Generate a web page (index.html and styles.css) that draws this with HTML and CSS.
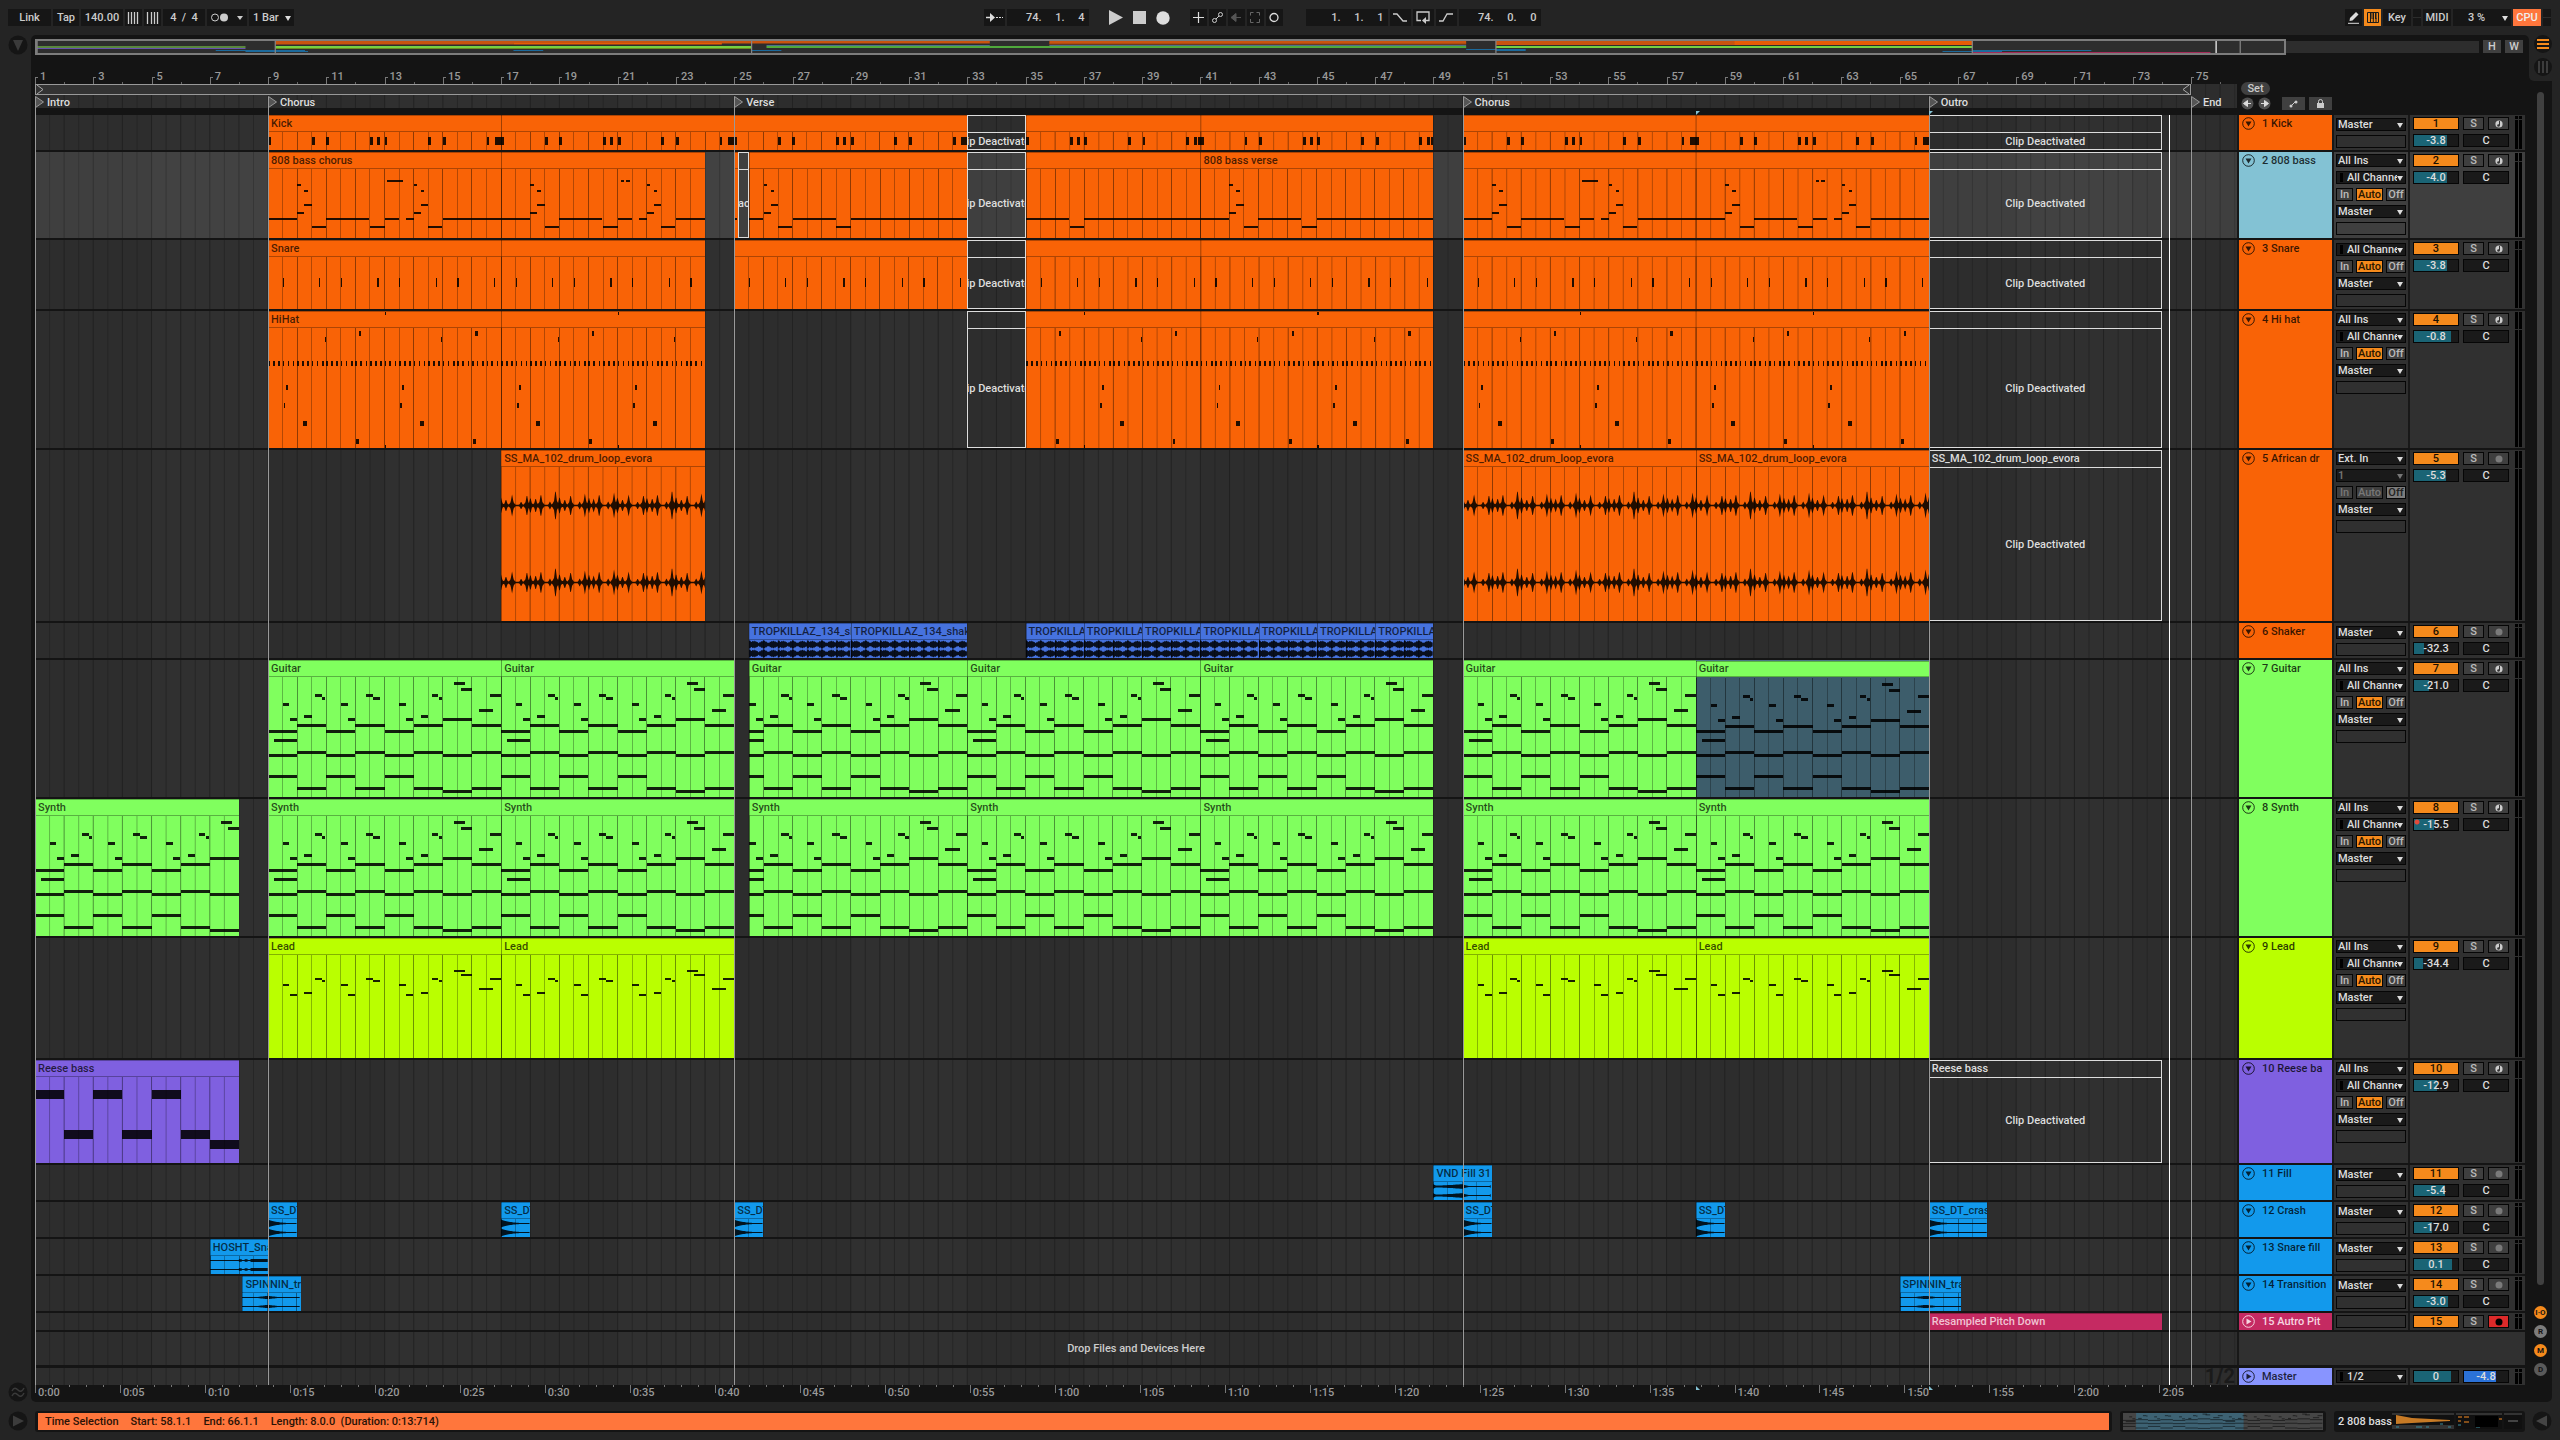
FILE: index.html
```html
<!DOCTYPE html>
<html lang="en">
<head>
    <meta charset="UTF-8">
    <meta name="viewport" content="width=device-width, initial-scale=1.0">
    <title>Arrangement</title>
    <link rel="stylesheet" href="styles.css">
</head>
<body>
    <header class="topbar">
        <div class="group">
            <button class="ctl w-link">Link</button>
            <button class="ctl w-tap">Tap</button>
            <input class="ctl w-field" value="140.00" aria-label="Tempo">
            <button class="ctl w-icon" aria-label="Nudge down"><svg width="13" height="12"><path d="M1.5 0v12M4.5 0v12M7.5 0v12M10.5 0v12" stroke="#ccc" stroke-width="1.3"/></svg></button>
            <button class="ctl w-icon" aria-label="Nudge up"><svg width="13" height="12"><path d="M1.5 0v12M5.5 0v12M8.5 0v12M11.5 0v12" stroke="#ccc" stroke-width="1.3"/></svg></button>
            <input class="ctl w-field" value="4  /  4" aria-label="Time signature">
            <button class="ctl w-metro" aria-label="Metronome"><svg width="34" height="11"><circle cx="5" cy="5.500" r="3.500" fill="none" stroke="#ccc"/><circle cx="14" cy="5.500" r="4" fill="#ccc"/><path d="M27 4h6l-3 4z" fill="#ccc"/></svg></button>
            <span class="picker w-quant"><select class="ctl" aria-label="Quantization"><option>1 Bar</option></select></span>
        </div>
        <div class="spacer-left"></div>
        <div class="group">
            <button class="ctl w-wide" aria-label="Follow"><svg width="17" height="11"><path d="M0 5.500h5" stroke="#ddd" stroke-width="1.5"/><path d="M4 1l5 4.500-5 4.500z" fill="#ddd"/><path d="M10 5.500h2M13 5.500h2M16 5.500h1" stroke="#ddd"/></svg></button>
            <input class="ctl w-pos" value="74.     1.     4" aria-label="Arrangement position">
            <div class="transport">
                <button class="bare" aria-label="Play"><svg width="14" height="15"><path d="M0 0l14 7.500-14 7.500z" fill="#ccc"/></svg></button>
                <button class="bare" aria-label="Stop"><svg width="13" height="13"><path d="M0 0h13v13H0z" fill="#ccc"/></svg></button>
                <button class="bare" aria-label="Record"><svg width="14" height="14"><circle cx="7" cy="7" r="6.700" fill="#ddd"/></svg></button>
            </div>
            <button class="ctl w-icon" aria-label="Overdub"><svg width="11" height="11"><path d="M5.500 0v11M0 5.500h11" stroke="#ddd" stroke-width="1.200"/></svg></button>
            <button class="ctl w-icon" aria-label="Automation arm"><svg width="11" height="11"><circle cx="2.500" cy="8.500" r="2" fill="none" stroke="#ccc"/><circle cx="8.500" cy="2.500" r="2" fill="none" stroke="#ccc"/><path d="M4 7l3-3" stroke="#ccc"/></svg></button>
            <button class="ctl w-icon" aria-label="Re-enable automation"><svg width="10" height="11"><path d="M0 5.500l5-4v8zM4 5.500h6" fill="#555" stroke="#555"/></svg></button>
            <button class="ctl w-icon" aria-label="Capture"><svg width="10" height="11"><path d="M.5 3.500v-3h3M6.500.5h3v3M9.500 7v3.500h-3M3.500 10.500h-3V7" fill="none" stroke="#666"/></svg></button>
            <button class="ctl w-icon" aria-label="Session record"><svg width="10" height="11"><circle cx="5" cy="5.500" r="4" fill="none" stroke="#ddd" stroke-width="1.300"/></svg></button>
            <div class="gap-wide"></div>
            <input class="ctl w-pos" value="1.     1.     1" aria-label="Loop start">
            <button class="ctl w-wide" aria-label="Punch in"><svg width="14" height="9"><path d="M0 1h4l6 7h4" fill="none" stroke="#ccc" stroke-width="1.300"/></svg></button>
            <button class="ctl w-wide" aria-label="Loop"><svg width="14" height="13"><path d="M5 9.500H1V1h12v8.500H9" fill="none" stroke="#ccc" stroke-width="1.300"/><path d="M10 6v7L6 9.500z" fill="#ccc"/></svg></button>
            <button class="ctl w-wide" aria-label="Punch out"><svg width="14" height="9"><path d="M0 8h4l4-7h6" fill="none" stroke="#ccc" stroke-width="1.300"/></svg></button>
            <input class="ctl w-pos" value="74.     0.     0" aria-label="Loop length">
        </div>
        <div class="spacer-right"></div>
        <div class="group">
            <button class="ctl w-icon" aria-label="Draw mode"><svg width="11" height="12"><path d="M1.500 9l.5-3 6-6 2.500 2.500-6 6z" fill="#ddd"/><path d="M0 11.300h11" stroke="#ddd"/></svg></button>
            <button class="ctl w-icon on" aria-label="Computer keyboard"><svg width="12" height="11"><path d="M.5.5h11v10H.5zM3.500 6v4M6.300 6v4M9 6v4" fill="none" stroke="#1a1a1a"/><path d="M3 1h1.500v6H3zM5.500 1H7v6H5.500zM8 1h1.500v6H8z" fill="#1a1a1a"/></svg></button>
            <button class="ctl w-key">Key</button>
            <span class="ctl w-led"><i></i></span>
            <button class="ctl w-midi">MIDI</button>
            <span class="picker w-cpu"><select class="ctl" aria-label="CPU load"><option>3 %</option></select></span>
            <button class="ctl w-key cpu">CPU</button>
            <span class="ctl w-led"><i></i></span>
        </div>
    </header>

    <main class="workspace">
        <div class="gutter">
            <button class="round" aria-label="Show browser"><svg width="20" height="20"><circle cx="10" cy="10" r="9.500" fill="#151515"/><path d="M5 5h10l-5 11z" fill="#3a3a3a"/></svg></button>
            <button class="round" aria-label="Groove pool"><svg width="20" height="20"><circle cx="10" cy="10" r="9.500" fill="#151515"/><path d="M4 9c2-4 4-3 6-1s4 2 6-2M4 14c2-4 4-3 6-1s4 2 6-2" fill="none" stroke="#3a3a3a" stroke-width="1.500"/></svg></button>
        </div>
        <section class="arranger">
            <div class="overview-row">
                <div class="overview"><svg id="overview" viewBox="0 0 8209 12" preserveAspectRatio="none"></svg><div class="overview-frame"></div></div>
                <button class="hw">H</button>
                <button class="hw">W</button>
            </div>
            <div class="heads">
                <div class="rulers">
                    <div class="bar-ruler" id="barRuler"></div>
                    <div class="loop-row" id="loopRow"><div class="loop" id="loop"><svg width="9" height="9"><path d="M1 0l6 4.500L1 9" fill="none" stroke="#aaa"/></svg><svg width="9" height="9"><path d="M8 0L2 4.500 8 9" fill="none" stroke="#aaa"/></svg></div></div>
                    <div class="locator-row" id="locatorRow"></div>
                </div>
                <div class="locator-tools">
                    <button class="set">Set</button>
                    <div class="tool-line">
                        <button class="nav" aria-label="Previous locator"><svg width="13" height="13"><circle cx="6.500" cy="6.500" r="6" fill="#505050"/><path d="M2.500 6.500l4-3v6zM6 6.500h4" fill="#ddd" stroke="#ddd"/></svg></button>
                        <button class="nav" aria-label="Next locator"><svg width="13" height="13"><circle cx="6.500" cy="6.500" r="6" fill="#505050"/><path d="M10.500 6.500l-4-3v6zM7 6.500H3" fill="#ddd" stroke="#ddd"/></svg></button>
                        <button class="tool first" aria-label="Automation mode"><svg width="9" height="8"><path d="M1.500 6.500l5-5" stroke="#ccc"/><circle cx="2" cy="6" r="1.500" fill="#ccc"/><circle cx="7" cy="2" r="1.500" fill="#ccc"/></svg></button>
                        <button class="tool" aria-label="Lock envelopes"><svg width="9" height="9"><path d="M1 4h7v5H1z" fill="#ccc"/><path d="M2.500 4V2.500a2 2 0 0 1 4 0V4" fill="none" stroke="#ccc"/></svg></button>
                    </div>
                </div>
            </div>
            <div class="tracks" id="tracks"></div>
            <div class="time-ruler"><div class="time-scale" id="timeScale"></div></div>
            <div class="overlay" id="overlay"></div>
        </section>
        <aside class="side">
            <div class="notch">
                <button class="round" aria-label="Arrangement view"><svg width="18" height="18"><circle cx="9" cy="9" r="9" fill="#151515"/><path d="M3 5h12M3 9h12M3 13h12" stroke="#f58a1c" stroke-width="2"/></svg></button>
                <button class="round" aria-label="Session view"><svg width="18" height="18"><circle cx="9" cy="9" r="9" fill="#151515"/><path d="M5 3v12M9 3v12M13 3v12" stroke="#3c3c3c" stroke-width="2"/></svg></button>
            </div>
            <div class="scroll"></div>
            <div class="toggles">
                <button class="dot lit">I·O</button>
                <button class="dot">R</button>
                <button class="dot lit">M</button>
                <button class="dot dim">D</button>
            </div>
        </aside>
    </main>

    <footer class="statusbar">
        <button class="round" aria-label="Info view"><svg width="20" height="20"><circle cx="10" cy="10" r="9.500" fill="#151515"/><path d="M5 4.500l11 5.500-11 5.500z" fill="#3c3c3c"/></svg></button>
        <div class="message"><p><span>Time Selection</span><span>Start: 58.1.1</span><span>End: 66.1.1</span><span>Length: 8.0.0&nbsp; (Duration: 0:13:714)</span></p></div>
        <div class="thumb"><svg id="clipThumb" viewBox="0 0 199 16" preserveAspectRatio="none"></svg></div>
        <div class="device"><span>2 808 bass</span>
            <svg viewBox="0 0 130 16" width="130" height="16">
                <path d="M0 0h62v16H0zM64 0h46v16H64zM112 0h18v16h-18z" fill="#101010"/>
                <path d="M0 0h62v2H0zM0 12h62v4H0zM64 0h46v2H64zM112 0h18v2h-18z" fill="#333"/>
                <path d="M4 2l16 3 38 2v1l-38 2-16 1z" fill="#c77a25"/>
                <path d="M4 14h3M24 14h6M34 14h3M48 11h3M56 14h3M66 12h3M84 14h4" stroke="#3a8ea0"/>
                <path d="M66 4h4M72 4h5M66 8h3M72 9h5M107 6h3" stroke="#a8621d" stroke-width="1.500"/>
                <path d="M83 3h23v11H83z" fill="#000"/><path d="M116 8h10" stroke="#777"/>
            </svg>
        </div>
        <button class="round" aria-label="Show clip view"><svg width="20" height="20"><circle cx="10" cy="10" r="9.500" fill="#151515"/><path d="M15 4.500L4 10l11 5.500z" fill="#444"/></svg></button>
    </footer>
    <script src="script.js"></script>
</body>
</html>
```
FILE: styles.css
```css
* {
    box-sizing: border-box;
    margin: 0;
    padding: 0;
}

body {
    min-height: 100vh;
    display: flex;
    flex-direction: column;
    background: #242424;
    color: #ccc;
    font-family: Roboto, "Liberation Sans", sans-serif;
    font-size: 11px;
    font-weight: 500;
    overflow-x: hidden;
}

button, input, select {
    font: inherit;
    color: inherit;
    border: none;
    outline: none;
    background: none;
    border-radius: 0;
}

svg {
    display: block;
}

/* top bar */
.topbar {
    height: 35px;
    padding: 0 9px 0 8px;
    display: flex;
    align-items: center;
}

.group {
    display: flex;
    align-items: center;
    gap: 2px;
}

.spacer-left { flex: 6; }
.spacer-right { flex: 7; }
.gap-wide { width: 19px; }

.ctl {
    height: 17px;
    background: #161616;
    display: flex;
    align-items: center;
    justify-content: center;
    text-align: center;
    white-space: nowrap;
}

.w-link { width: 43px; }
.w-tap { width: 26px; }
.w-field { width: 42px; }
.w-icon { width: 17px; }
.w-metro { width: 40px; }
.w-quant { width: 45px; }
.w-wide { width: 21px; }
.w-pos { width: 82px; text-align: right; padding-right: 4px; white-space: pre; }
.w-key { width: 28px; }
.w-led { width: 8px; }
.w-midi { width: 28px; }
.w-cpu { width: 58px; }
.w-led i { width: 8px; height: 1px; background: #2c2c2c; }

.ctl.on { background: #f58a1c; }
.ctl.cpu { background: #ff763c; color: #eee; }

.transport {
    display: flex;
    align-items: center;
    gap: 10px;
    margin: 0 18px;
}

/* drop-down with a small triangle */
.picker {
    position: relative;
    display: block;
}

.picker select {
    appearance: none;
    width: 100%;
    padding: 0 12px 0 4px;
    text-align: left;
}

.picker::after {
    content: "";
    position: absolute;
    right: 3px;
    top: 50%;
    margin-top: -2px;
    border: 3px solid transparent;
    border-top: 5px solid #ddd;
    border-bottom: none;
    pointer-events: none;
}

.w-cpu select { padding-left: 15px; }

/* workspace */
.workspace {
    display: flex;
    padding-right: 8px;
}

.gutter {
    width: 31px;
    display: flex;
    flex-direction: column;
    justify-content: space-between;
    align-items: center;
    padding-left: 4px;
}

.round {
    display: flex;
}

.arranger {
    position: relative;
    flex: 1;
    min-width: 0;
    padding: 4px 4px 0 4px;
    background: #141414;
    border-radius: 5px 5px 0 5px;
}

.overview-row {
    display: flex;
    gap: 4px;
    height: 18px;
    padding-right: 2px;
}

.overview {
    flex: 1;
    position: relative;
    height: 12px;
    margin-top: 2px;
    background: #2d2d2d;
}

.overview svg {
    width: 100%;
    height: 12px;
}

.overview-frame {
    position: absolute;
    left: 0;
    top: -2px;
    width: 92.1%;
    height: 16px;
    border: 2px solid #7c7c7c;
}

.hw {
    width: 18px;
    height: 13px;
    margin-top: 1px;
    background: #404040;
    line-height: 13px;
}

.heads {
    display: flex;
    gap: 2px;
}

.rulers {
    flex: 1;
    min-width: 0;
    padding-bottom: 7px;
}

.bar-ruler {
    position: relative;
    height: 27px;
    overflow: hidden;
    color: #999;
}

.bar-ruler span {
    position: absolute;
    bottom: 0;
    height: 7px;
    border-left: 1px solid #777;
    padding-left: 4px;
}

.bar-ruler span::before {
    content: "";
    position: absolute;
    left: 0;
    top: 0;
    width: 2px;
    height: 1px;
    background: #777;
}

.bar-ruler b {
    display: block;
    font-weight: 500;
    line-height: 12px;
    margin-top: -6px;
}

.bar-ruler i {
    position: absolute;
    bottom: 0;
    width: 1px;
    height: 2px;
    background: #666;
}

.loop-row, .locator-row {
    position: relative;
    background: #2d2d2d;
}

.loop-row { height: 11px; }
.locator-row { height: 13px; }

.loop {
    position: relative;
    display: flex;
    justify-content: space-between;
    height: 11px;
    background: #333;
    border: 1px solid #999;
}

.locator-row span {
    position: absolute;
    top: 1px;
    display: flex;
    gap: 2px;
    line-height: 13px;
    color: #ddd;
}

.locator-tools {
    width: 286px;
    padding: 25px 2px 0 2px;
}

.set {
    display: block;
    width: 29px;
    height: 13px;
    line-height: 13px;
    border-radius: 7px;
    background: #404040;
}

.tool-line {
    display: flex;
    align-items: center;
    gap: 4px;
    margin-top: 2px;
}

.tool {
    width: 23px;
    height: 13px;
    background: #404040;
    display: flex;
    align-items: center;
    justify-content: center;
}

.tool.first { margin-left: 7px; }

/* tracks */
.track {
    display: flex;
    gap: 2px;
    margin-bottom: 2px;
    background: #181818;
}

.track.spare { margin-bottom: 3px; }
.track.master { margin-bottom: 0; }

.lane {
    position: relative;
    flex: 1;
    min-width: 0;
    overflow: hidden;
    background: #2d2d2d;
}

.grid {
    position: absolute;
    left: 0;
    top: 0;
    width: 100%;
    height: 100%;
}

.grid .beat { stroke: #222; }
.grid .half { stroke: #262626; }
.grid .shade { fill: #fff; fill-opacity: .015; }

.selected .lane, .selected .io, .selected .mix { background: #3f3f3f; }
.selected .grid .beat { stroke: #323232; }
.selected .grid .half { stroke: #363636; }

.track-head {
    width: 93px;
    display: flex;
    gap: 7px;
    padding: 2px 0 0 3px;
    line-height: 13px;
    color: rgba(0, 0, 0, .78);
    white-space: nowrap;
    overflow: hidden;
}

.track-head button { height: 13px; }

.io {
    width: 74px;
    padding: 2px;
    background: #303030;
    display: flex;
    flex-direction: column;
    gap: 4px;
}

.io.low { padding-top: 3px; }

.io .picker select {
    display: block;
    height: 13px;
    line-height: 13px;
    padding: 0 9px 0 2px;
    background: #1a1a1a;
    outline: 1px solid #060606;
    outline-offset: -1px;
    color: #ddd;
}

.io .picker.midi select { padding-left: 11px; }
.io .picker.midi::before {
    content: "";
    position: absolute;
    left: 4px;
    top: 2px;
    width: 3px;
    height: 9px;
    background: #000;
}

.io .picker.off select { color: #777; }
.io .picker.off::after { border-top-color: #777; }

.monitor {
    display: flex;
    gap: 3px;
}

.monitor button, .mix button {
    height: 13px;
    line-height: 11px;
    background: #3f3f3f;
    border: 1px solid #060606;
    color: #bbb;
    overflow: hidden;
    display: flex;
    align-items: center;
    justify-content: center;
}

.monitor button:nth-child(1) { width: 17px; }
.monitor button:nth-child(2) { width: 27px; }
.monitor button:nth-child(3) { width: 20px; }
.monitor .lit { background: #f58a1c; color: #2a1700; }
.monitor.off button { color: #777; }
.monitor.off .lit { background: #7c7c7c; color: #222; }

.slot {
    height: 13px;
    border: 1px solid #060606;
}

.mix {
    width: 115px;
    padding: 2px 3px 1px;
    background: #303030;
    display: flex;
    justify-content: space-between;
}

.strip {
    width: 96px;
    display: flex;
    flex-wrap: wrap;
    align-content: flex-start;
    gap: 4px;
}

.mix .strip .active { width: 46px; background: #f58a1c; color: #1c1000; }
.mix .solo, .mix .arm { width: 21px; }
.mix .arm.red { background: #dc2a2a; }

.value {
    width: 46px;
    height: 13px;
    border: 1px solid #060606;
    text-align: center;
    color: #ddd;
    background: linear-gradient(to right, #1a6475 var(--level, 0%), #1a1a1a var(--level, 0%));
}

.value.cue { background: linear-gradient(to right, #2b72d8 var(--level), #1a1a1a var(--level)); }

.strip .automated {
    background-image: radial-gradient(circle at 3px 3px, #e04a3a 2px, transparent 3px), linear-gradient(to right, #1a6475 var(--level), #1a1a1a var(--level));
}

.meter {
    position: relative;
    width: 7px;
    margin-top: -1px;
    border-left: 3px solid #000;
    border-right: 3px solid #000;
}

.meter::after {
    content: "";
    position: absolute;
    left: -3px;
    right: -3px;
    top: 3px;
    height: 1px;
    background: #303030;
}

.tall .meter::after { top: 17px; }

.tall.short-meter .meter::after { top: 8px; }

.drop {
    position: absolute;
    left: 0;
    right: 0;
    top: 0;
    line-height: 33px;
    text-align: center;
}

.fill {
    width: 286px;
    background: #303030;
}

.out-label {
    position: absolute;
    right: 2px;
    top: -2px;
    font-size: 20px;
    line-height: 20px;
    font-weight: 700;
    color: #1a1a1a;
}

/* clips */
.clip {
    position: absolute;
    top: 0;
    bottom: 0;
    overflow: hidden;
}

.clip svg {
    position: absolute;
    left: 0;
    top: 0;
    width: 100%;
    height: 100%;
}

.clip h3 {
    position: relative;
    height: 17px;
    padding-left: 3px;
    border-top: 1px solid rgba(0, 0, 0, .3);
    border-bottom: 1px solid rgba(0, 0, 0, .3);
    font-size: 11px;
    font-weight: 500;
    line-height: 15px;
    color: rgba(0, 0, 0, .72);
    white-space: nowrap;
    overflow: hidden;
}

.clip .beat { stroke: rgba(0, 0, 0, .42); }
.clip .half { stroke: rgba(0, 0, 0, .28); }
.clip .edge { stroke: rgba(0, 0, 0, .36); }
.clip .note { fill: #000; fill-opacity: .87; }

.orange { background: #f96306; }
.green { background: #80ff5e; }
.lime { background: #baff00; }
.purple { background: #7f60e0; }
.blue { background: #1299ec; }
.royal { background: #4672de; }
.sky { background: #83c2d4; }
.pink { background: #c52a62; }
.peri { background: #8894ff; }

.pink.clip h3 { color: #f0c4d4; border-bottom: none; }
.pink.track-head { color: #f6d5e0; }

.clip.picked { background: #3d5d6b; border-top: 1px solid #4c7484; }
.clip.picked h3 { background: #80ff5e; height: 16px; line-height: 14px; }

.clip.dead { border: 1px solid #ddd; }
.clip.dead h3 {
    color: #ddd;
    border-top: none;
    border-bottom: 1px solid #ddd;
    padding-left: 2px;
}

.clip.dead p {
    height: calc(100% - 17px);
    display: flex;
    align-items: center;
    justify-content: center;
    white-space: nowrap;
    color: #ddd;
}

/* time ruler and full height markers */
.time-ruler {
    height: 17px;
    padding-right: 288px;
}

.time-scale {
    position: relative;
    height: 17px;
    overflow: hidden;
    color: #999;
}

.time-scale span {
    position: absolute;
    top: 0;
    height: 8px;
    line-height: 15px;
    padding-left: 2px;
    border-left: 1px solid #777;
}

.time-scale i {
    position: absolute;
    top: 0;
    width: 1px;
    height: 2px;
    background: #777;
}

.overlay {
    position: absolute;
    left: 4px;
    right: 292px;
    top: 62px;
    bottom: 17px;
    pointer-events: none;
}

.overlay i {
    position: absolute;
    top: 0;
    bottom: 0;
    width: 1px;
    background: #999;
}

.overlay .playhead { top: 18px; background: #fff; }

.overlay svg {
    position: absolute;
}

.overlay .mark-top { top: 14px; }
.overlay .mark-bottom { bottom: -5px; }

/* right side */
.side {
    width: 23px;
    background: #141414;
    display: flex;
    flex-direction: column;
    align-items: center;
    border-radius: 0 0 5px 0;
}

.notch {
    width: 23px;
    height: 46px;
    background: #242424;
    border-radius: 0 0 0 5px;
    display: flex;
    flex-direction: column;
    align-items: center;
    gap: 5px;
    padding-left: 4px;
}

.scroll {
    flex: 1;
    width: 7px;
    margin-top: 11px;
    border-radius: 4px;
    background: #404040;
}

.toggles {
    display: flex;
    flex-direction: column;
    gap: 6px;
    padding: 21px 0 26px;
}

.dot {
    width: 13px;
    height: 13px;
    border-radius: 7px;
    background: #7c7c7c;
    color: #141414;
    font-size: 8px;
    font-weight: 700;
    line-height: 13px;
    text-align: center;
}

.dot.lit { background: #f58a1c; }
.dot.dim { background: #5a5a5a; }

/* status bar */
.statusbar {
    display: flex;
    align-items: center;
    height: 38px;
    padding: 0 8px;
}

.message {
    flex: 1;
    margin: 0 8px 0 7px;
    padding: 2px 3px;
    background: #141414;
    border-radius: 3px;
}

.message p {
    height: 17px;
    line-height: 17px;
    padding-left: 7px;
    background: #ff763c;
    color: #2a1206;
    display: flex;
    gap: 12px;
}

.thumb {
    width: 206px;
    padding: 2px 3px;
    margin-right: 8px;
    background: #141414;
    border-radius: 3px;
}

.thumb svg {
    width: 100%;
    height: 17px;
    background: #464646;
}

.device {
    width: 191px;
    height: 21px;
    padding: 0 3px 0 4px;
    margin-right: 7px;
    display: flex;
    align-items: center;
    justify-content: space-between;
    background: #141414;
    border-radius: 3px;
    color: #ddd;
    white-space: nowrap;
}
```
FILE: script.js
```js
const BARS = 75.58;
const SEC = 140 / 240;

const pos = (bar) => (bar - 1) / BARS * 100 + '%';
const byId = (id) => document.getElementById(id);

// note: [top, height, start, end], times in bars
const kick = { period: 8, notes: [0, 1.5, 2, 3.5, 3.75, 4, 5.5, 6, 7.5, 7.78, 7.9].map(t => [22, 8, t, t + 0.1]) };

const bassHit = (t) => [[32, 2, t, t + .12], [60, 2, t, t + .24], [38, 2, t + .24, t + .36], [52, 2, t + .24, t + .5], [74, 2, t + .5, t + .98]];
const bass = {
    period: 16, notes: [
        [66, 2, 0, .98], ...bassHit(1), [66, 2, 2, 3.48], [74, 2, 3.5, 4], [66, 2, 4, 4.5], [28, 2, 4.1, 4.62], [66, 2, 4.73, 5], ...bassHit(5), [66, 2, 6, 8.98],
        ...bassHit(9), [66, 2, 10, 11.48], [74, 2, 11.5, 12], [66, 2, 12, 12.5], [28, 2, 12.1, 12.23], [28, 2, 12.3, 12.42], [66, 2, 12.73, 13], ...bassHit(13), [66, 2, 14, 16]
    ]
};
const bassVerse = { period: 8, notes: [[66, 2, 0, .98], ...bassHit(1), [66, 2, 2, 3.48], [74, 2, 3.5, 4], [66, 2, 4, 8]] };
const snare = { period: 4, notes: [.5, 1.75, 2.5, 3.75].map(t => [38, 9, t, t + .045]) };

const hat = { period: 8, notes: [[1, 3, 4, 4.04], [134, 3, 4, 4.04]] };
for (let b = 0; b < 8; b += 4) {
    hat.notes.push([20, 5, b + 3.12, b + 3.2], [26, 5, b + 1.94, b + 1.98], [74, 5, b + .61, b + .67], [92, 5, b + .54, b + .6], [110, 5, b + 1.21, b + 1.35], [128, 5, b + 3.03, b + 3.13]);
}
for (let b = 0; b < 16; b++) {
    [0, .17, .35].forEach(t => hat.notes.push([50, 5, b / 2 + t, b / 2 + t + .055]));
}

// melody rows are semitone steps counted down from the top note
const melody = [
    [7, .5, .73], [7, 2.5, 2.73], [7, 4.5, 4.73],
    [12, .75, .98], [12, 2.74, 2.97], [12, 4.74, 4.98],
    [11, 1.22, 1.5], [11, 5.24, 5.48],
    [4, 1.6, 1.87], [4, 3.36, 3.62], [4, 5.62, 5.85], [4, 7.61, 8],
    [5, 1.87, 1.97], [5, 3.62, 3.86], [5, 5.86, 5.98],
    [0, 6.38, 6.75], [2, 6.62, 7], [9, 7.24, 7.74]
];
const chords = [
    [16, 0, 1], [16, 2, 3], [16, 4, 5], [14, 1, 2], [14, 3, 4], [14, 5, 6], [14, 7, 8], [12, 6, 7], [19, .22, 1],
    [24, 0, 1], [24, 2, 3], [24, 4, 5], [24, 6, 7], [23, 1, 2], [23, 3, 4], [23, 5, 6], [23, 7, 8],
    [31, 0, 1], [31, 2, 3], [31, 4, 5], [35, 1, 2], [35, 3, 4], [35, 5, 6], [35, 7, 8], [36, 6, 7]
];
const guitar = { period: 8, notes: melody.concat(chords).map(n => [22 + n[0] * 3, 3, n[1], n[2]]) };
const lead = { period: 8, notes: melody.map(n => [32 + n[0] * 2, 2, n[1], n[2]]) };
const reese = { period: 8, notes: [[30, 9, 0, 1], [70, 9, 1, 2], [30, 9, 2, 3], [70, 9, 3, 4], [30, 9, 4, 5], [70, 9, 5, 6], [80, 9, 6, 7]] };

// audio envelopes: half height in px at a given time in bars
const hits = [[0, 8], [.17, 6.5], [.38, 11], [.69, 4], [.89, 11], [1.01, 8], [1.19, 7.5], [1.37, 12], [1.68, 4], [1.87, 16], [2.01, 9], [2.19, 6.5], [2.39, 11], [2.7, 4], [2.88, 12], [3.02, 8], [3.18, 7], [3.37, 12], [3.68, 4], [3.88, 13], [4, 9]];
const drums = (t) => {
    const x = t % 4;
    return Math.max(.8, ...hits.map(h => Math.max(h[1] * (1 - Math.abs(x - h[0]) / .07), h[1] * .45 * (1 - Math.abs(x - h[0]) / .14))));
};
const shaker = (t) => {
    const x = t % 1;
    const swell = 1.2 + 2 * Math.abs(Math.sin(x * Math.PI * 3));
    return x < .05 || Math.abs(x - .5) < .03 ? 4 : swell + (Math.round(x * 50) % 3 ? 0 : .7);
};
const crash = (t) => Math.max(.6, 4 * Math.exp(-t * 3));
const fillEnv = (t) => Math.max(.6, t < 1 ? 1 + t * t * 1.4 : 2.4 * Math.exp(-(t - 1) * 6), 2.4 - t * 14, (t - 1.93) * 30);
const snareFill = (t) => t < 1 ? .5 : (t < 1.4 ? (t % .2 < .1 ? 1.2 : .5) : 1.4);
const riser = (t) => Math.max(.6, 1.6 - Math.abs(t - .88) * 3);

const many = (from, to, step, more) => {
    const out = [];
    for (let b = from; b < to; b += step) out.push({ from: b, to: Math.min(b + step, to), ...more });
    return out;
};
const dead = (from, to, name) => ({ from, to, name, dead: true });

const tracks = [
    { name: '1 Kick', h: 35, color: 'orange', io: 'out', vol: '-3.8', level: 76, arm: 'midi', clips: [
        { from: 9, to: 33, name: 'Kick', notes: kick }, dead(33, 35), { from: 35, to: 49, notes: kick, offset: 2 }, { from: 50, to: 66, notes: kick }, dead(66, 74)] },
    { name: '2 808 bass', h: 86, color: 'sky', clipColor: 'orange', io: 'full', vol: '-4.0', level: 76, arm: 'midi', selected: true, clips: [
        { from: 9, to: 24, name: '808 bass chorus', notes: bass }, { from: 25, to: 25.12, notes: bassVerse }, dead(25.12, 25.5), { from: 25.5, to: 33, notes: bassVerse, offset: .5 }, dead(33, 35),
        { from: 35, to: 41, notes: bassVerse, offset: 2 }, { from: 41, to: 49, name: '808 bass verse', notes: bassVerse }, { from: 50, to: 66, notes: bass }, dead(66, 74)] },
    { name: '3 Snare', h: 69, color: 'orange', io: 'channel', vol: '-3.8', level: 76, arm: 'midi', clips: [
        { from: 9, to: 24, name: 'Snare', notes: snare }, { from: 25, to: 33, notes: snare }, dead(33, 35), { from: 35, to: 49, notes: snare, offset: 2 }, { from: 50, to: 66, notes: snare }, dead(66, 74)] },
    { name: '4 Hi hat', h: 137, color: 'orange', io: 'full', vol: '-0.8', level: 84, arm: 'midi', clips: [
        { from: 9, to: 24, name: 'HiHat', notes: hat }, dead(33, 35), { from: 35, to: 49, notes: hat, offset: 2 }, { from: 50, to: 66, notes: hat }, dead(66, 74)] },
    { name: '5 African dr', h: 171, color: 'orange', io: 'ext', vol: '-5.3', level: 72, arm: 'audio', clips: [
        { from: 17, to: 24, name: 'SS_MA_102_drum_loop_evora', wave: drums }, ...many(50, 66, 8, { name: 'SS_MA_102_drum_loop_evora', wave: drums }), dead(66, 74, 'SS_MA_102_drum_loop_evora')] },
    { name: '6 Shaker', h: 35, color: 'orange', clipColor: 'royal', io: 'out', vol: '-32.3', level: 22, arm: 'audio', clips: [
        { from: 25.5, to: 29, name: 'TROPKILLAZ_134_shaker', wave: shaker }, { from: 29, to: 33, name: 'TROPKILLAZ_134_shaker', wave: shaker }, ...many(35, 49, 2, { name: 'TROPKILLAZ_134', wave: shaker })] },
    { name: '7 Guitar', h: 137, color: 'green', io: 'full', vol: '-21.0', level: 34, arm: 'midi', clips: [
        ...many(9, 25, 8, { name: 'Guitar', notes: guitar }), { from: 25.5, to: 33, name: 'Guitar', notes: guitar, offset: .5 }, ...many(33, 49, 8, { name: 'Guitar', notes: guitar }),
        { from: 50, to: 58, name: 'Guitar', notes: guitar }, { from: 58, to: 66, name: 'Guitar', notes: guitar, picked: true }] },
    { name: '8 Synth', h: 137, color: 'green', io: 'full', vol: '-15.5', level: 45, arm: 'midi', automated: true, clips: [
        { from: 1, to: 8, name: 'Synth', notes: guitar }, ...many(9, 25, 8, { name: 'Synth', notes: guitar }), { from: 25.5, to: 33, name: 'Synth', notes: guitar, offset: .5 },
        ...many(33, 49, 8, { name: 'Synth', notes: guitar }), ...many(50, 66, 8, { name: 'Synth', notes: guitar })] },
    { name: '9 Lead', h: 120, color: 'lime', io: 'full', vol: '-34.4', level: 20, arm: 'midi', clips: [
        ...many(9, 25, 8, { name: 'Lead', notes: lead }), ...many(50, 66, 8, { name: 'Lead', notes: lead })] },
    { name: '10 Reese ba', h: 103, color: 'purple', io: 'full', vol: '-12.9', level: 52, arm: 'midi', clips: [
        { from: 1, to: 8, name: 'Reese bass', notes: reese }, dead(66, 74, 'Reese bass')] },
    { name: '11 Fill', h: 35, color: 'blue', io: 'out', vol: '-5.4', level: 71, arm: 'audio', clips: [{ from: 49, to: 51, name: 'VND Fill 31', wave: fillEnv }] },
    { name: '12 Crash', h: 35, color: 'blue', io: 'out', vol: '-17.0', level: 42, arm: 'audio', clips: [
        ...[9, 17, 25, 50, 58].map(b => ({ from: b, to: b + 1, name: 'SS_DT_crash', wave: crash })), { from: 66, to: 68, name: 'SS_DT_crash', wave: crash }] },
    { name: '13 Snare fill', h: 35, color: 'blue', io: 'out', vol: '0.1', level: 86, arm: 'audio', clips: [{ from: 7, to: 9, name: 'HOSHT_Snare', wave: snareFill }] },
    { name: '14 Transition', h: 35, color: 'blue', io: 'out', vol: '-3.0', level: 77, arm: 'audio', clips: [
        { from: 8.12, to: 10.12, name: 'SPINNIN_trans', wave: riser }, { from: 65, to: 67.12, name: 'SPINNIN_trans', wave: riser }] },
    { name: '15 Autro Pit', h: 17, color: 'pink', io: 'none', arm: 'red', folded: true, clips: [{ from: 66, to: 74, name: 'Resampled Pitch Down', flat: true }] }
];

function lines(from, to, h, top) {
    let out = '';
    for (let b = Math.ceil(from * 2) / 2; b < to; b += .5) {
        const x = (b - from) * 100;
        out += `<line class="${b % 1 ? 'half' : 'beat'}" x1="${x}" x2="${x}" y1="${top}" y2="${h}" vector-effect="non-scaling-stroke"/>`;
    }
    return out;
}

function grid(h) {
    let shade = '';
    for (let b = 5; b < 76; b += 8) shade += `<rect class="shade" x="${(b - 1) * 100}" width="400" height="${h}"/>`;
    return `<svg class="grid" viewBox="0 0 ${BARS * 100} ${h}" preserveAspectRatio="none" shape-rendering="crispEdges">${shade}${lines(1, 1 + BARS, h, 0)}</svg>`;
}

function notes(clip) {
    const off = clip.offset || 0;
    const len = clip.to - clip.from;
    const p = clip.notes.period;
    let out = '';
    for (let base = 0; base < off + len; base += p) {
        clip.notes.notes.forEach(([y, h, s, e]) => {
            const a = Math.max(base + s - off, 0);
            const z = Math.min(base + e - off, len);
            if (z > a) out += `<rect class="note" x="${(a * 100).toFixed(1)}" y="${y}" width="${((z - a) * 100).toFixed(1)}" height="${h}"/>`;
        });
    }
    return out;
}

function wave(clip, h) {
    const len = clip.to - clip.from;
    return [.25, .75].map(part => {
        const mid = 17 + (h - 17) * part;
        const up = [], down = [];
        for (let t = 0; t <= len; t += .02) {
            const a = clip.wave(t);
            up.push(`${(t * 100).toFixed(0)},${(mid - a).toFixed(1)}`);
            down.unshift(`${(t * 100).toFixed(0)},${(mid + a).toFixed(1)}`);
        }
        return `<polygon class="note" points="${up.concat(down).join(' ')}"/>`;
    }).join('');
}

function clipHtml(clip, track) {
    const place = `left:${pos(clip.from)};width:${(clip.to - clip.from) / BARS * 100}%`;
    const title = `<h3>${clip.name || ''}</h3>`;
    if (clip.dead) return `<div class="clip dead" style="${place}">${title}<p>Clip Deactivated</p></div>`;
    const color = clip.picked ? 'picked' : (track.clipColor || track.color);
    if (clip.flat) return `<div class="clip ${color}" style="${place}">${title}</div>`;
    const edges = [clip.from];
    [17, 41, 58].forEach(b => { if (b > clip.from && b < clip.to) edges.push(b); });
    const marks = edges.map(b => `<line class="edge" x1="${(b - clip.from) * 100}" x2="${(b - clip.from) * 100}" y1="0" y2="${track.h}" vector-effect="non-scaling-stroke"/>`).join('');
    const body = lines(clip.from, clip.to, track.h, 17) + marks + (clip.notes ? notes(clip) : '');
    const audio = clip.wave ? `<svg viewBox="0 0 ${(clip.to - clip.from) * 100} ${track.h}" preserveAspectRatio="none">${wave(clip, track.h)}</svg>` : '';
    return `<div class="clip ${color}" style="${place}">${title}<svg viewBox="0 0 ${(clip.to - clip.from) * 100} ${track.h}" preserveAspectRatio="none" shape-rendering="crispEdges">${body}</svg>${audio}</div>`;
}

const picker = (text, label, cls = '') => `<span class="picker ${cls}"><select aria-label="${label}"><option>${text}</option></select></span>`;
const monitor = (cls, lit) => `<div class="monitor ${cls}">${['In', 'Auto', 'Off'].map(m => `<button class="${m === lit ? 'lit' : ''}">${m}</button>`).join('')}</div>`;

function ioHtml(kind) {
    const slot = '<div class="slot"></div>';
    const out = picker('Master', 'Output') + slot;
    const channel = picker('All Channels', 'Input channel', 'midi') + monitor('', 'Auto') + out;
    if (kind === 'full') return `<div class="io">${picker('All Ins', 'Input')}${channel}</div>`;
    if (kind === 'channel') return `<div class="io low">${channel}</div>`;
    if (kind === 'ext') return `<div class="io">${picker('Ext. In', 'Input')}${picker('1', 'Input channel', 'off')}${monitor('off', 'Off')}${out}</div>`;
    if (kind === 'out') return `<div class="io low">${out}</div>`;
    return `<div class="io">${slot}</div>`;
}

const armIcons = {
    midi: '<circle cx="4" cy="4" r="3.600" fill="#ccc"/><path d="M4.500 1v4.500" stroke="#333"/><circle cx="3.500" cy="5.500" r="1.300" fill="#333"/>',
    audio: '<circle cx="4" cy="4" r="3.500" fill="#7a7a7a"/>',
    red: '<circle cx="4" cy="4" r="3.500" fill="#000"/>'
};

const foldIcon = (folded) => `<button aria-label="Fold"><svg width="13" height="13"><circle cx="6.500" cy="6.500" r="5.800" fill="none" stroke="currentColor"/><path d="${folded ? 'M4.500 3.500l5 3-5 3z' : 'M3.500 4.500h6l-3 5z'}" fill="currentColor"/></svg></button>`;

function trackHtml(t) {
    const num = t.name.split(' ')[0];
    const level = t.vol ? `<input class="value ${t.automated ? 'automated' : ''}" style="--level:${t.level}%" value="${t.vol}" aria-label="Volume"><input class="value" value="C" aria-label="Pan">` : '';
    const size = t.h > 100 ? 'tall' : t.h > 40 ? 'tall short-meter' : '';
    return `<div class="track ${t.selected ? 'selected' : ''} ${size}" style="height:${t.h}px">
        <div class="lane">${grid(t.h)}${t.clips.map(c => clipHtml(c, t)).join('')}</div>
        <div class="track-head ${t.color}">${foldIcon(t.folded)}<span>${t.name}</span></div>
        ${ioHtml(t.io)}
        <div class="mix"><div class="strip"><button class="active">${num}</button><button class="solo">S</button><button class="arm ${t.arm}" aria-label="Arm"><svg width="8" height="8">${armIcons[t.arm]}</svg></button>${level}</div><div class="meter"></div></div>
    </div>`;
}

byId('tracks').innerHTML = tracks.map(trackHtml).join('') + `
    <div class="track spare" style="height:33px"><div class="lane">${grid(33)}<p class="drop">Drop Files and Devices Here</p></div><div class="fill"></div></div>
    <div class="track master" style="height:17px"><div class="lane">${grid(17)}<span class="out-label">1/2</span></div>
        <div class="track-head peri">${foldIcon(true)}<span>Master</span></div>
        <div class="io">${picker('1/2', 'Master output', 'midi')}</div>
        <div class="mix"><div class="strip"><input class="value" style="--level:84%" value="0" aria-label="Master volume"><input class="value cue" style="--level:73%" value="-4.8" aria-label="Cue volume"></div><div class="meter"></div></div>
    </div>`;

// rulers
let ruler = '';
for (let b = 1; b < 1 + BARS; b++) ruler += b % 2 ? `<span style="left:${pos(b)}"><b>${b}</b></span>` : `<i style="left:${pos(b)}"></i>`;
byId('barRuler').innerHTML = ruler;

byId('loop').style.width = 74 / BARS * 100 + '%';
byId('loopRow').insertAdjacentHTML('afterbegin', grid(11));

const locators = [[1, 'Intro'], [9, 'Chorus'], [25, 'Verse'], [50, 'Chorus'], [66, 'Outro'], [75, 'End']];
byId('locatorRow').innerHTML = grid(13) + locators.map(([b, name]) => `<span style="left:${pos(b)}"><svg width="10" height="12"><path d="M.5.5l8 5.500-8 5.500z" fill="#555" stroke="#999"/></svg>${name}</span>`).join('');

let scale = '';
for (let s = 0; s < 130; s++) {
    const at = pos(1 + s * SEC);
    scale += s % 5 ? `<i style="left:${at}"></i>` : `<span style="left:${at}">${Math.floor(s / 60)}:${String(s % 60).padStart(2, '0')}</span>`;
}
byId('timeScale').innerHTML = scale;

byId('overlay').innerHTML = locators.map(([b]) => `<i style="left:${pos(b)}"></i>`).join('') +
    `<i class="playhead" style="left:${pos(74.24)}"></i>` +
    [58, 66].map(b => `<svg class="mark-top" style="left:${pos(b)}" width="4" height="4"><path d="M0 0h4L0 4z" fill="#83c2d4"/></svg><svg class="mark-bottom" style="left:${pos(b)}" width="4" height="4"><path d="M0 0v4h4z" fill="#83c2d4"/></svg>`).join('');

// song overview: [y, h, from, to, color]
const strips = [
    [0, 2.5, 9, 33, '#c8540f'], [2, 1.5, 9, 17, '#c8540f'], [2, 1.5, 17, 24, '#e65c06'], [0, 2.5, 35, 49, '#c8540f'], [2, 1.5, 35, 49, '#b04c10'], [0, 4, 50, 58, '#c8540f'], [0, 4, 58, 66, '#e65c06'],
    [5, 2, 1, 8, '#59873f'], [7, 1, 1, 8, '#6850b0'], [5, 2, 9, 25, '#76d040'], [7, 1, 9, 25, '#6a8a20'], [4, 1, 25.5, 33, '#4c6f8c'], [5, 2, 25.5, 49, '#4fa83c'], [4, 1, 35, 49, '#4c6f8c'], [5, 2, 50, 66, '#76d040'],
    [9, 1, 7, 10, '#1c6a9c'], [10, 1, 8, 10.1, '#1c6a9c'], [9, 1, 17, 18, '#1c6a9c'], [9, 1, 25, 26, '#1c6a9c'], [8, 1, 49, 51, '#1c6a9c'], [9, 1, 50, 51, '#1c6a9c'], [10, 1, 65, 67, '#1c6a9c'], [9, 1, 66, 70, '#1c6a9c'], [11, 1, 66, 74, '#a42a58']
];
byId('overview').innerHTML = strips.map(([y, h, a, z, c]) => `<rect x="${(a - 1) * 100 + 7}" y="${y}" width="${(z - a) * 100}" height="${h}" fill="${c}"/>`).join('') +
    locators.map(([b]) => `<rect x="${(b - 1) * 100 + 5}" width="4" height="12" fill="#888"/>`).join('') + '<rect x="7324" width="4" height="12" fill="#fff"/>';

// clip thumbnail in the status bar
let thumb = '<rect x="13" width="107" height="16" fill="#3d6273"/>';
for (let i = 0; i < 16; i++) {
    const n = guitar.notes.filter(v => Math.floor(v[2]) === i % 8);
    n.forEach(v => thumb += `<rect x="${(Math.floor(i / 8) * 8 + v[2]) * 12.4}" y="${(v[0] - 18) / 8}" width="${(v[3] - v[2]) * 12.4}" height="1" fill="#000" fill-opacity=".5"/>`);
}
byId('clipThumb').innerHTML = thumb;
```
